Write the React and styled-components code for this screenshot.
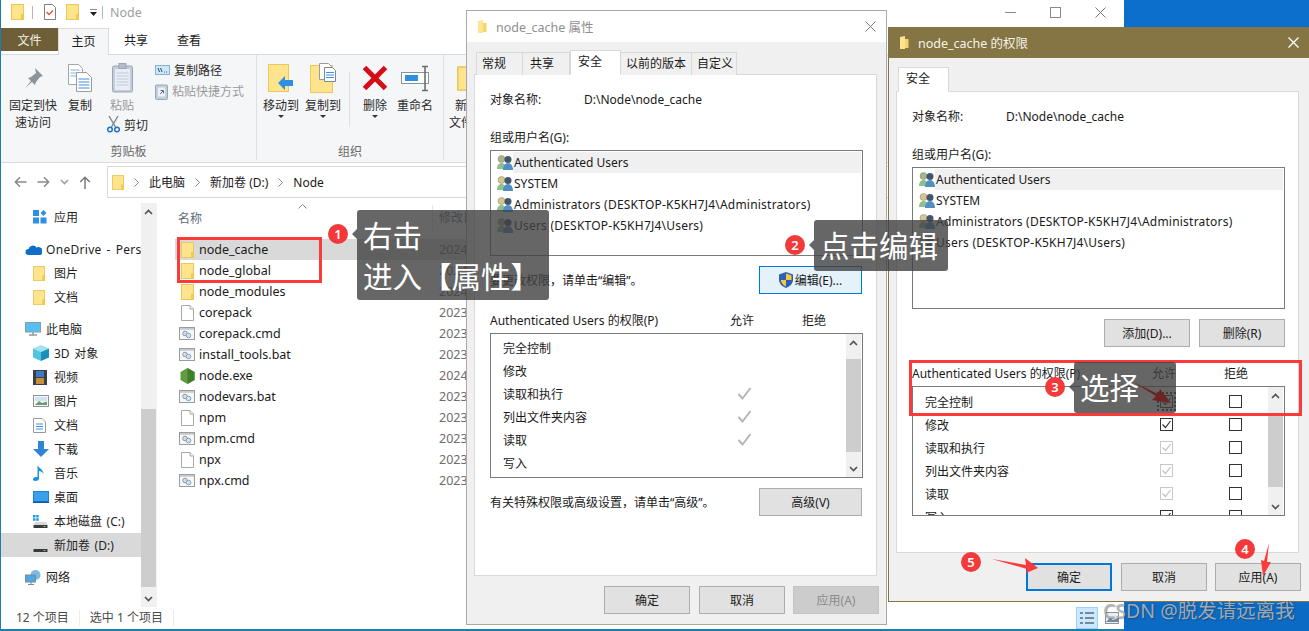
import React from "react";
import styled, { createGlobalStyle } from "styled-components";

const FONT = `"Noto Sans", "Noto Sans CJK SC", sans-serif`;

const Global = createGlobalStyle`
  html, body { margin: 0; padding: 0; background: #0a6cc6; }
  * { box-sizing: border-box; }
`;

const Desktop = styled.div`
  position: relative;
  width: 1309px;
  height: 631px;
  overflow: hidden;
  font-family: ${FONT};
  font-size: 12px;
  color: #1a1a1a;
  background: linear-gradient(180deg, #0d6fcc 0%, #0a6ac4 100%);
`;

/* ---------- explorer ---------- */

const Explorer = styled.div`
  position: absolute;
  left: 0;
  top: 0;
  width: 1124px;
  height: 631px;
  display: flex;
  flex-direction: column;
  background: #fff;
  border-left: 1px solid #1b7fae;
  border-bottom: 2px solid #1b7fae;
`;

const TitleBar = styled.div`
  height: 27px;
  flex: none;
  display: flex;
  align-items: center;
  padding: 0 0 3px 10px;
  position: relative;
`;

const TitleSep = styled.span`
  width: 1px;
  height: 13px;
  background: #b5b5b5;
  margin: 0 ${({ $r }) => $r || 0}px 0 ${({ $l }) => $l || 0}px;
`;

const TitleGap = styled.span`
  width: ${({ $w }) => $w}px;
  flex: none;
`;

const TitleText = styled.span`
  color: #a0a0a0;
  font-size: 12.5px;
`;

const WinButtons = styled.div`
  margin-left: auto;
  width: 101px;
  margin-right: 18px;
  display: flex;
  align-items: center;
  justify-content: space-between;
`;

const MenuTabs = styled.div`
  height: 28px;
  flex: none;
  display: flex;
  align-items: flex-start;
  padding-top: 1px;
  position: relative;
  z-index: 1;
`;

const FileTab = styled.div`
  width: 57px;
  height: 23px;
  background: #6e5f39;
  color: #f5f2e8;
  display: flex;
  align-items: center;
  justify-content: center;
`;

const MenuTab = styled.div`
  width: ${({ $w }) => $w}px;
  height: ${({ $on }) => ($on ? 27 : 23)}px;
  padding-top: 3px;
  text-align: center;
  background: ${({ $on }) => ($on ? "#f5f6f7" : "transparent")};
  border: ${({ $on }) => ($on ? "1px solid #dadbdc" : "none")};
  border-bottom: none;
`;

const Ribbon = styled.div`
  height: 109px;
  flex: none;
  margin-top: -1px;
  display: flex;
  background: #f5f6f7;
  border-top: 1px solid #dadbdc;
  border-bottom: 1px solid #dadbdc;
`;

const RibbonGroup = styled.div`
  width: ${({ $w }) => $w}px;
  flex: none;
  display: flex;
  flex-direction: column;
  padding-top: 5px;
  border-right: 1px solid #dfe0e1;
  margin-bottom: 2px;
`;

const GroupBody = styled.div`
  flex: 1;
  display: flex;
  padding-left: ${({ $pl }) => $pl || 0}px;
`;

const GroupLabel = styled.div`
  text-align: center;
  color: #6a6a6a;
  height: 16px;
  line-height: 16px;
`;

const BigButton = styled.div`
  width: ${({ $w }) => $w}px;
  flex: none;
  display: flex;
  flex-direction: column;
  align-items: center;
  line-height: 17px;
  text-align: center;
  white-space: nowrap;
  color: ${({ $off }) => ($off ? "#9a9a9a" : "#2a2a2a")};
`;

const BigIcon = styled.div`
  height: 36px;
  display: flex;
  align-items: center;
  justify-content: center;
  margin-bottom: 1px;
`;

const Caret = styled.span`
  width: 0;
  height: 0;
  margin-top: 1px;
  border: 3px solid transparent;
  border-top: 3px solid #333;
  border-bottom: none;
`;

const PasteColumn = styled.div`
  width: 52px;
  flex: none;
  display: flex;
  flex-direction: column;
`;

const SmallColumn = styled.div`
  display: flex;
  flex-direction: column;
  gap: 5px;
  padding-top: 2px;
`;

const SmallRow = styled.div`
  display: flex;
  align-items: center;
  gap: 4px;
  height: 16px;
  color: ${({ $off }) => ($off ? "#9a9a9a" : "#2a2a2a")};
`;

const CutRow = styled(SmallRow)`
  margin: 2px 0 0 4px;
  height: 17px;
`;

const GroupRule = styled.span`
  width: 1px;
  height: 55px;
  margin: 12px 0 0;
  background: #dfe0e1;
  flex: none;
`;

const AddressRow = styled.div`
  height: 42px;
  flex: none;
  display: flex;
  align-items: center;
  padding: 0 0 4px 13px;
`;

const NavGlyphs = styled.div`
  width: 93px;
  flex: none;
  display: flex;
  align-items: center;
  gap: 10px;
`;

const AddressBox = styled.div`
  flex: 1;
  height: 32px;
  display: flex;
  align-items: center;
  padding-left: 4px;
  border: 1px solid #d9d9d9;
  border-right: none;
  font-size: 12px;
`;

const Chevron = styled.svg`
  margin: 0 10px;
  flex: none;
`;

const MainArea = styled.div`
  flex: 1;
  min-height: 0;
  margin-top: -2px;
  display: flex;
`;

const NavPane = styled.div`
  width: 140px;
  flex: none;
  padding-top: 2px;
  overflow: hidden;
`;

const NavItem = styled.div`
  height: 24px;
  display: flex;
  align-items: center;
  white-space: nowrap;
  overflow: hidden;
  word-spacing: 1.5px;
  letter-spacing: ${({ $wide }) => ($wide ? "0.3px" : "0")};
  margin-top: ${({ $gap }) => $gap || 0}px;
  padding-left: ${({ $top }) => ($top ? 24 : 32)}px;
  background: ${({ $on }) => ($on ? "#d9d9d9" : "transparent")};
  color: #1f1f1f;
`;

const NavIcon = styled.span`
  width: 21px;
  flex: none;
  display: flex;
  align-items: center;
`;

const VScroll = styled.div`
  width: ${({ $w }) => $w || 15}px;
  flex: none;
  display: flex;
  flex-direction: column;
  align-items: stretch;
  background: #f0f0f0;
`;

const ScrollArrow = styled.div`
  height: ${({ $h }) => $h || 17}px;
  flex: none;
  display: flex;
  align-items: center;
  justify-content: center;
`;

const ScrollGap = styled.div`
  height: ${({ $h }) => $h}px;
  flex: ${({ $h }) => ($h ? "none" : 1)};
`;

const ScrollThumb = styled.div`
  height: ${({ $h }) => $h}px;
  flex: none;
  background: #cdcdcd;
`;

const ListPane = styled.div`
  flex: 1;
  min-width: 0;
  padding: 2px 0 0 19px;
  border-left: 1px solid #f2f2f2;
  position: relative;
`;

const ListHead = styled.div`
  height: 34px;
  display: flex;
  align-items: flex-start;
  color: #5f6b7a;
`;

const HeadName = styled.span`
  width: 256px;
  flex: none;
  position: relative;
  padding: 4px 0 0 2px;
`;

const SortMark = styled.svg`
  position: absolute;
  left: 122px;
  top: -1px;
`;

const HeadDate = styled.span`
  padding-left: 6px;
  border-left: 1px solid #e5e5e5;
  height: 26px;
  line-height: 26px;
`;

const FileRow = styled.div`
  height: 21px;
  margin-left: -1px;
  display: flex;
  align-items: center;
  background: ${({ $on }) => ($on ? "#d9d9d9" : "transparent")};
  font-size: 12.5px;
`;

const FileIconCell = styled.span`
  width: 24px;
  flex: none;
  display: flex;
  justify-content: center;
`;

const FileName = styled.span`
  width: 240px;
  flex: none;
`;

const FileDate = styled.span`
  color: #6d6d6d;
`;

const StatusBar = styled.div`
  height: 22px;
  flex: none;
  display: flex;
  align-items: center;
  padding-left: 15px;
  color: #4a4a4a;
  position: relative;
`;

const StatusCell = styled.span`
  padding-right: ${({ $pr }) => $pr}px;
  margin-right: 10px;
  border-right: 1px solid #ececec;
  line-height: 16px;
`;

const ViewToggle = styled.div`
  position: absolute;
  left: 1075px;
  top: 0;
  display: flex;
  gap: 3px;
  align-items: center;
`;

const ViewButton = styled.span`
  width: 22px;
  height: 22px;
  display: flex;
  align-items: center;
  justify-content: center;
  background: ${({ $on }) => ($on ? "#cce8ff" : "transparent")};
  border: ${({ $on }) => ($on ? "1px solid #99d1ff" : "none")};
`;

/* ---------- dialogs ---------- */

const Dialog = styled.div`
  position: absolute;
  left: ${({ $x }) => $x}px;
  top: ${({ $y }) => $y}px;
  width: 421px;
  height: ${({ $h }) => $h}px;
  display: flex;
  flex-direction: column;
  background: #f0f0f0;
  border: 1px solid ${({ $active }) => ($active ? "#857545" : "#a9a9a9")};
  ${({ $active }) => ($active ? "border-right: none; border-top: none;" : "")}
`;

const DialogTitle = styled.div`
  height: 31px;
  flex: none;
  display: flex;
  align-items: center;
  padding-left: 10px;
  gap: 9px;
  background: ${({ $active }) => ($active ? "#857545" : "#fff")};
  color: ${({ $active }) => ($active ? "#f5f2e6" : "#8f8f8f")};
  font-size: 12.5px;
`;

const DialogClose = styled.span`
  margin-left: auto;
  margin-right: 10px;
  display: flex;
`;

const TabStrip = styled.div`
  height: ${({ $h }) => $h}px;
  flex: none;
  display: flex;
  align-items: flex-end;
  padding-left: 2px;
  margin-left: 7px;
  position: relative;
  z-index: 1;
`;

const DlgTab = styled.div`
  width: ${({ $w }) => $w}px;
  height: ${({ $on }) => ($on ? 25 : 23)}px;
  padding-left: ${({ $pl }) => $pl || 6}px;
  padding-top: 1px;
  background: ${({ $on }) => ($on ? "#fff" : "#f0f0f0")};
  border: 1px solid #d9d9d9;
  border-bottom: ${({ $on }) => ($on ? "1px solid #fff" : "none")};
  border-left: ${({ $noLeft }) => ($noLeft ? "none" : "1px solid #d9d9d9")};
  white-space: nowrap;
`;

const Panel = styled.div`
  height: ${({ $h }) => $h}px;
  flex: none;
  margin: -1px 0 0 7px;
  width: 403px;
  background: #fff;
  border: 1px solid #d9d9d9;
  padding: 16px 13px 0 15px;
  display: flex;
  flex-direction: column;
`;

const NameLine = styled.div`
  height: 18px;
  line-height: 18px;
  display: flex;
`;

const NameKey = styled.span`
  width: 94px;
  flex: none;
`;

const GroupCaption = styled.div`
  height: 18px;
  line-height: 20px;
  margin: 19px 0 4px;
`;

const UserBox = styled.div`
  height: ${({ $h }) => $h}px;
  flex: none;
  border: 1px solid #7a7a7a;
  padding: 1px;
`;

const UserRow = styled.div`
  height: 21px;
  display: flex;
  align-items: center;
  padding-left: 5px;
`;

const UserIconCell = styled.span`
  width: 16px;
  flex: none;
  display: flex;
`;

const UserName = styled.span`
  flex: 1;
  height: 21px;
  line-height: 21px;
  padding-left: 1px;
  background: ${({ $on }) => ($on ? "#f0f0f0" : "transparent")};
  letter-spacing: ${({ $wide }) => ($wide ? "0.22px" : "0")};
  white-space: nowrap;
`;

const ActionRow = styled.div`
  height: 28px;
  flex: none;
  margin-top: 10px;
  display: flex;
  align-items: center;
  justify-content: ${({ $right }) => ($right ? "flex-end" : "space-between")};
  gap: 9px;
  padding-right: ${({ $right }) => ($right ? 0 : 1)}px;
`;

const Btn = styled.div`
  width: ${({ $w }) => $w || 86}px;
  height: 28px;
  flex: none;
  display: flex;
  align-items: center;
  justify-content: center;
  gap: 2px;
  white-space: nowrap;
  background: ${({ $variant }) =>
    $variant === "hot" ? "#e5f1fb" : $variant === "off" ? "#cccccc" : "#e1e1e1"};
  color: ${({ $variant }) => ($variant === "off" ? "#8a8a8a" : "#1a1a1a")};
  border: ${({ $variant }) =>
    $variant === "hot"
      ? "1px solid #0078d7"
      : $variant === "primary"
      ? "2px solid #0078d7"
      : $variant === "off"
      ? "1px solid #c4c4c4"
      : "1px solid #adadad"};
`;

const PermHead = styled.div`
  height: 18px;
  line-height: 20px;
  margin: 17px 0 4px;
  display: grid;
  grid-template-columns: 240px 72px auto;
`;

const PermBox = styled.div`
  height: ${({ $h }) => $h}px;
  flex: none;
  display: flex;
  border: 1px solid #7a7a7a;
  overflow: hidden;
`;

const PermList = styled.div`
  flex: 1;
  padding: ${({ $pt }) => $pt}px 0 0 12px;
  overflow: hidden;
`;

const PermRow = styled.div`
  height: 23px;
  display: grid;
  grid-template-columns: 228px 26px 43px 26px;
  align-items: center;
  justify-items: center;
`;

const PermName = styled.span`
  justify-self: start;
`;

const CheckBox = styled.span`
  width: 13px;
  height: 13px;
  display: block;
  border: 1px solid ${({ $dim }) => ($dim ? "#c8c8c8" : "#333")};
  background: #fff;
  position: relative;
`;

const FocusMark = styled.span`
  position: absolute;
  inset: -4px;
  border: 2px dotted #333;
`;

const BoxScroll = styled(VScroll)`
  margin: 0 1px;
`;

const Footer = styled.div`
  flex: 1;
  display: flex;
  justify-content: flex-end;
  gap: 8px;
  padding: 10px ${({ $pr }) => $pr}px 0 0;
  & > :first-child {
    margin-right: 1px;
  }
`;

/* ---------- annotations ---------- */

const RedFrame = styled.div`
  position: absolute;
  left: ${({ $x }) => $x}px;
  top: ${({ $y }) => $y}px;
  width: ${({ $w }) => $w}px;
  height: ${({ $h }) => $h}px;
  border: 3px solid #fb3a3a;
`;

const Note = styled.div`
  position: absolute;
  left: ${({ $x }) => $x}px;
  top: ${({ $y }) => $y}px;
  width: ${({ $w }) => $w}px;
  padding: ${({ $two }) => ($two ? "5px 0 3px 6px" : "5px 0 5px 6px")};
  background: rgba(64, 64, 64, 0.8);
  border-radius: 3px;
  color: #fff;
  font-size: 29.5px;
  line-height: 41px;
  white-space: nowrap;
  &::before {
    content: "";
    position: absolute;
    left: -5px;
    top: ${({ $two }) => ($two ? 19 : 20)}px;
    border: 5px solid transparent;
    border-left: none;
    border-right: 5px solid rgba(64, 64, 64, 0.8);
  }
`;

const Badge = styled.span`
  position: absolute;
  left: ${({ $x }) => $x}px;
  top: ${({ $y }) => $y}px;
  width: 20px;
  height: 20px;
  border-radius: 50%;
  background: #f23a3a;
  color: #fff;
  font-size: 13px;
  line-height: 20px;
  text-align: center;
  font-weight: 600;
`;

const ArrowLayer = styled.svg`
  position: absolute;
  left: 0;
  top: 0;
  pointer-events: none;
`;

const Watermark = styled.div`
  position: absolute;
  left: 1103px;
  top: 597px;
  font-size: 19.5px;
  line-height: 28px;
  color: rgba(172, 178, 184, 0.92);
  text-shadow: 1px 1px 1px rgba(50, 50, 50, 0.45);
  white-space: nowrap;
`;

/* ---------- drawings ---------- */

const Folder = ({ w = 13, h = 16 }) => (
  <svg width={w} height={h} viewBox="0 0 13 16">
    <rect x=".5" y=".5" width="12" height="15" fill="#fde48d" stroke="#edc65c" />
    <rect x="10" y="10" width="3" height="6" fill="#f3c84f" />
  </svg>
);

const BlankFile = () => (
  <svg width="13" height="16" viewBox="0 0 13 16">
    <path d="M.5.5h8.500l3.500 3.500v11.500h-12z" fill="#fff" stroke="#a9a9a9" />
    <path d="M9 .5v3.500h3.500" fill="#f2f2f2" stroke="#a9a9a9" />
  </svg>
);

const ScriptFile = () => (
  <svg width="16" height="13" viewBox="0 0 16 13">
    <rect x=".5" y=".5" width="15" height="12" fill="#f7f7f7" stroke="#9c9c9c" />
    <rect x="1" y="1" width="14" height="1.800" fill="#c4cad0" />
    <circle cx="6" cy="6.500" r="2.300" fill="#d8dde2" stroke="#8e9aa6" />
    <circle cx="9.500" cy="8.500" r="2.300" fill="#cfe3f3" stroke="#7fa4c2" />
  </svg>
);

const NodeIcon = () => (
  <svg width="15" height="16" viewBox="0 0 15 16">
    <path d="M7.500 0l7 4v8l-7 4-7-4V4z" fill="#5d9c3f" />
    <path d="M7.500 0l7 4v8l-7 4z" fill="#3e7d2d" />
  </svg>
);

const UsersIcon = ({ tint = "#b7ba84" }) => (
  <svg width="16" height="15" viewBox="0 0 16 15">
    <circle cx="4.500" cy="4" r="3.500" fill={tint} stroke="#7d8a6a" strokeWidth=".5" />
    <path d="M0 14c0-4 2-6 4.500-6s4.500 2 4.500 6z" fill="#8fbf8a" />
    <circle cx="11" cy="4.500" r="3.500" fill="#41566e" />
    <path d="M6 15c0-4 2-7 5-7s5 3 5 7z" fill="#4f8fc4" />
  </svg>
);

const Shield = () => (
  <svg width="14" height="16" viewBox="0 0 14 16">
    <path d="M7 0l7 2.500v5c0 4-3 7-7 8.500-4-1.500-7-4.500-7-8.500v-5z" fill="#2b5fb8" />
    <path d="M7 1.500v6.500h5.500v-4.500zM7 8v6.500c-2.600-1.200-4.800-3.400-5.200-6.500z" fill="#f7c93e" />
  </svg>
);

const Cross = ({ s = 11, color = "#7a7a7a", sw = 1 }) => (
  <svg width={s} height={s} viewBox="0 0 11 11">
    <path d="M.5.5l10 10M10.500.5l-10 10" stroke={color} strokeWidth={sw} fill="none" />
  </svg>
);

const Tick = ({ color = "#b5b5b5", s = 15, sw = 2 }) => (
  <svg width={s} height={s} viewBox="0 0 15 15">
    <path d="M1.500 8l4 4.500 8-10.500" stroke={color} strokeWidth={sw} fill="none" />
  </svg>
);

const BoxTickSvg = styled.svg`
  display: block;
`;

const BoxTick = ({ color }) => (
  <BoxTickSvg width="11" height="11" viewBox="0 0 11 11">
    <path d="M1.500 5.500l3 3 5-6.500" stroke={color} strokeWidth="1.200" fill="none" />
  </BoxTickSvg>
);

const ArrowUpSmall = ({ dir = "up", color = "#505050" }) => (
  <svg width="9" height="6" viewBox="0 0 9 6">
    <path
      d={dir === "up" ? "M1 5l3.500-3.500 3.500 3.500" : "M1 1l3.500 3.500 3.500-3.500"}
      stroke={color}
      strokeWidth="1.600"
      fill="none"
    />
  </svg>
);

const CrumbArrow = () => (
  <Chevron width="5" height="9" viewBox="0 0 5 9">
    <path d="M.5.5l4 4-4 4" stroke="#8a8a8a" strokeWidth="1" fill="none" />
  </Chevron>
);

const Pin = () => (
  <svg width="22" height="22" viewBox="0 0 22 22">
    <path d="M13 1l8 8-3 1-4 5-1 3-3-3-7 6 6-7-3-3 3-1 5-4z" fill="#8c949b" />
  </svg>
);

const PageStack = () => (
  <svg width="24" height="28" viewBox="0 0 24 28">
    <path d="M.5.500h10l4 4v16h-14z" fill="#fff" stroke="#a5a5a5" />
    <path d="M2.500 6h9M2.500 9h9M2.500 12h9" stroke="#7fb2e6" />
    <path d="M8.500 8.500h10l5 5v14h-15z" fill="#fff" stroke="#9a9a9a" />
    <path d="M10.500 15h11M10.500 18h11M10.500 21h11M10.500 24h11" stroke="#3f8fe0" />
  </svg>
);

const Clipboard = () => (
  <svg width="21" height="30" viewBox="0 0 21 30">
    <rect x=".5" y="3" width="20" height="26" rx="1.500" fill="#c4cedb" stroke="#9aa6b5" />
    <rect x="3" y="6" width="15" height="21" fill="#e9eef6" />
    <path d="M4.500 10h12M4.500 13h12M4.500 16h12M4.500 19h12M4.500 22h12" stroke="#c3cad4" />
    <rect x="7" y=".5" width="7" height="5" fill="#b4bcc8" stroke="#9aa6b5" />
  </svg>
);

const Scissors = () => (
  <svg width="13" height="17" viewBox="0 0 13 17">
    <path d="M2 0l6.500 11M11 0L4.500 11" stroke="#7d8791" strokeWidth="1.400" fill="none" />
    <circle cx="3" cy="13.500" r="2.300" fill="none" stroke="#1a74c4" strokeWidth="1.500" />
    <circle cx="10" cy="13.500" r="2.300" fill="none" stroke="#1a74c4" strokeWidth="1.500" />
  </svg>
);

const PathIcon = () => (
  <svg width="15" height="10" viewBox="0 0 15 10">
    <rect x=".5" y=".5" width="14" height="9" fill="#cfe6f7" stroke="#7fb4dc" />
    <path d="M3 3l1.500 4M5.500 3l1.500 4" stroke="#2a4a66" />
    <path d="M9 7h.8M11 7h.8" stroke="#2a4a66" />
  </svg>
);

const ShortcutIcon = () => (
  <svg width="13" height="17" viewBox="0 0 13 17">
    <rect x=".5" y="2" width="12" height="14.500" rx="1" fill="#c4cedb" stroke="#9aa6b5" />
    <rect x="3" y="4.500" width="7" height="9" fill="#eef2f7" />
    <path d="M5 11l3-3M5.500 7.500h3v3" stroke="#5c6a78" fill="none" />
  </svg>
);

const MoveTo = () => (
  <svg width="26" height="28" viewBox="0 0 26 28">
    <rect x=".5" y=".5" width="20" height="27" fill="#fde48d" stroke="#edc65c" />
    <path d="M10 19l7-7v4h8v6h-8v4z" fill="#2f8fe0" />
  </svg>
);

const CopyTo = () => (
  <svg width="26" height="30" viewBox="0 0 26 30">
    <rect x=".5" y="2.500" width="22" height="27" fill="#fde48d" stroke="#edc65c" />
    <path d="M9.500.5h9l3 3v13h-12z" fill="#fff" stroke="#9a9a9a" />
    <path d="M14.500 4.500h8l3 3v11h-11z" fill="#fff" stroke="#7d8791" />
    <path d="M16 9.500h8M16 12h8M16 14.500h8" stroke="#3f8fe0" />
  </svg>
);

const RedX = () => (
  <svg width="26" height="26" viewBox="0 0 26 26">
    <path d="M2.500 2.500l21 21M23.500 2.500l-21 21" stroke="#d60d18" strokeWidth="5" fill="none" />
  </svg>
);

const Rename = () => (
  <svg width="29" height="27" viewBox="0 0 29 27">
    <rect x=".5" y="7.500" width="27" height="11" fill="#fff" stroke="#8a929a" />
    <rect x="4" y="10" width="13" height="6" fill="#2f8fe0" />
    <path d="M21 1.500h6M24 1.500v24M21 25.500h6" stroke="#6e6e6e" strokeWidth="1.600" fill="none" />
  </svg>
);

const Apps = () => (
  <svg width="14" height="14" viewBox="0 0 14 14">
    <rect x="0" y="0" width="6" height="6" fill="#2f8fe8" />
    <rect x="0" y="7.500" width="6" height="6" fill="#2f8fe8" />
    <rect x="7.500" y="7.500" width="6" height="6" fill="#2f8fe8" />
    <path d="M10.500 0l3 3-3 3-3-3z" fill="#2f8fe8" />
  </svg>
);

const Cloud = () => (
  <svg width="17" height="11" viewBox="0 0 17 11">
    <path d="M3.500 11a3 3 0 010-6 4.500 4.500 0 018-1.500 3.500 3.500 0 014 7.500z" fill="#0f6fc8" />
  </svg>
);

const Monitor = () => (
  <svg width="16" height="14" viewBox="0 0 16 14">
    <rect x=".5" y=".5" width="15" height="9.500" fill="#58bff0" stroke="#8a9aa8" />
    <path d="M4 13h8M8 10v3" stroke="#8a9aa8" strokeWidth="1.500" />
  </svg>
);

const Cube = () => (
  <svg width="16" height="16" viewBox="0 0 16 16">
    <path d="M8 0l8 3.500-8 3.500-8-3.500z" fill="#9ee3f2" />
    <path d="M0 3.500l8 3.500v9l-8-3.500z" fill="#53c3e2" />
    <path d="M16 3.500l-8 3.500v9l8-3.500z" fill="#1a8fb8" />
  </svg>
);

const Film = () => (
  <svg width="14" height="15" viewBox="0 0 14 15">
    <rect width="14" height="15" fill="#3a3f46" />
    <rect x="3" y="1" width="8" height="6" fill="#3c7ac4" />
    <rect x="3" y="8" width="8" height="6" fill="#c48f3c" />
  </svg>
);

const Picture = () => (
  <svg width="16" height="12" viewBox="0 0 16 12">
    <rect x=".5" y=".5" width="15" height="11" fill="#f7f7f7" stroke="#8a929a" />
    <rect x="2" y="2" width="12" height="4" fill="#cfe3f3" />
    <path d="M2 10l4-4 3 2 5-1.500V10z" fill="#6f9a78" />
  </svg>
);

const DocLines = () => (
  <svg width="13" height="15" viewBox="0 0 13 15">
    <path d="M.5.500h8.500l3.500 3.500v10.500h-12z" fill="#fff" stroke="#9a9a9a" />
    <path d="M3 6h7M3 8.500h7M3 11h7" stroke="#3f8fe0" />
  </svg>
);

const Download = () => (
  <svg width="16" height="16" viewBox="0 0 16 16">
    <path d="M5 0h6v8h5l-8 8-8-8h5z" fill="#2f84d8" />
  </svg>
);

const Music = () => (
  <svg width="12" height="16" viewBox="0 0 12 16">
    <path d="M4.500 0c.5 3 6 4 6 9-1-2-3-3-4.500-3v7.500c0 1.500-1.500 2.500-3.500 2.500S0 15 0 14s1.500-2 3-2c.5 0 1 0 1.500.2z" fill="#1f8fe0" />
  </svg>
);

const DesktopIcon = () => (
  <svg width="16" height="12" viewBox="0 0 16 12">
    <rect width="16" height="12" fill="#1a7fd8" />
    <rect x="0" y="10.500" width="16" height="1.500" fill="#0e5aa6" />
    <rect x="1" y="1" width="14" height="9" fill="#3aa0ea" />
  </svg>
);

const Disk = ({ win }) => (
  <svg width="15" height="13" viewBox="0 0 15 13">
    {win && <path d="M0 0h2.500v2.500H0zM3.200 0h2.500v2.500H3.200zM0 3.200h2.500v2.500H0zM3.200 3.200h2.500v2.500H3.200z" fill="#1f9ae8" />}
    <path d="M2 7h11l1.500 3H.5z" fill="#d5d8db" />
    <rect x=".5" y="10" width="14" height="3" fill="#3a3a3a" />
    <rect x="10.500" y="11" width="2" height="1" fill="#60d060" />
  </svg>
);

const Network = () => (
  <svg width="16" height="15" viewBox="0 0 16 15">
    <circle cx="10.500" cy="5" r="5" fill="#7fb9e8" />
    <rect x=".5" y="5" width="10" height="7" fill="#4fa8e0" stroke="#7d8a96" />
    <path d="M3 14.500h6M6 12v2.500" stroke="#7d8a96" />
  </svg>
);

const BackSvg = styled.svg`
  transform: ${({ $flip }) => ($flip ? "scaleX(-1)" : "none")};
`;

const ArrowBack = ({ flip, color = "#8a8a8a" }) => (
  <BackSvg $flip={flip} width="13" height="12" viewBox="0 0 13 12">
    <path d="M12.500 6H1.500M6 1.200L1.300 6 6 10.800" stroke={color} strokeWidth="1.500" fill="none" />
  </BackSvg>
);

const ArrowUp = () => (
  <svg width="12" height="13" viewBox="0 0 12 13">
    <path d="M6 13V1.500M1.200 6L6 1.300 10.800 6" stroke="#7a7a7a" strokeWidth="1.500" fill="none" />
  </svg>
);

const NoteIcon = () => (
  <svg width="12" height="16" viewBox="0 0 12 16">
    <path d="M.5.500h8l3 3v12h-11z" fill="#fff" stroke="#808080" />
    <path d="M2.500 8l2.500 2.500 4-4" stroke="#e2562c" strokeWidth="1.300" fill="none" />
  </svg>
);

const DropMark = () => (
  <svg width="7" height="7" viewBox="0 0 7 7">
    <path d="M0 0h7" stroke="#222" />
    <path d="M0 3h7L3.500 7z" fill="#222" />
  </svg>
);

const TitleFolder = () => (
  <svg width="10" height="13" viewBox="0 0 10 13">
    <path d="M1 1l5-1v13H1z" fill="#fde48d" />
    <path d="M6 3h3.500v9H6z" fill="#f7d56a" />
  </svg>
);

/* ---------- data ---------- */

const NAV = [
  { label: "应用", icon: <Apps />, gap: 0 },
  { label: "OneDrive - Personal", icon: <Cloud />, top: true, gap: 8, wide: true },
  { label: "图片", icon: <Folder w={12} h={15} /> },
  { label: "文档", icon: <Folder w={12} h={15} /> },
  { label: "此电脑", icon: <Monitor />, top: true, gap: 8 },
  { label: "3D 对象", icon: <Cube /> },
  { label: "视频", icon: <Film /> },
  { label: "图片", icon: <Picture /> },
  { label: "文档", icon: <DocLines /> },
  { label: "下载", icon: <Download /> },
  { label: "音乐", icon: <Music /> },
  { label: "桌面", icon: <DesktopIcon /> },
  { label: "本地磁盘 (C:)", icon: <Disk win /> },
  { label: "新加卷 (D:)", icon: <Disk />, on: true },
  { label: "网络", icon: <Network />, top: true, gap: 8 },
];

const FILES = [
  ["node_cache", "folder", "2024", true],
  ["node_global", "folder", "2024"],
  ["node_modules", "folder", "2024"],
  ["corepack", "file", "2023"],
  ["corepack.cmd", "script", "2023"],
  ["install_tools.bat", "script", "2023"],
  ["node.exe", "node", "2024"],
  ["nodevars.bat", "script", "2023"],
  ["npm", "file", "2023"],
  ["npm.cmd", "script", "2023"],
  ["npx", "file", "2023"],
  ["npx.cmd", "script", "2023"],
];

const FILE_ICONS = {
  folder: <Folder />,
  file: <BlankFile />,
  script: <ScriptFile />,
  node: <NodeIcon />,
};

const USERS = [
  { name: "Authenticated Users", tint: "#a9b48e", on: true },
  { name: "SYSTEM", tint: "#d8c48c" },
  { name: "Administrators (DESKTOP-K5KH7J4\\Administrators)", tint: "#d8c48c", wide: true },
  { name: "Users (DESKTOP-K5KH7J4\\Users)", tint: "#a9b48e", wide: true },
];

const PERMS = ["完全控制", "修改", "读取和执行", "列出文件夹内容", "读取", "写入"];

/* ---------- pieces ---------- */

function Ribbons() {
  return (
    <Ribbon>
      <RibbonGroup $w={256}>
        <GroupBody $pl={8}>
          <BigButton $w={48}>
            <BigIcon><Pin /></BigIcon>
            固定到快<br />速访问
          </BigButton>
          <BigButton $w={46}>
            <BigIcon><PageStack /></BigIcon>
            复制
          </BigButton>
          <PasteColumn>
            <BigButton $w={38} $off>
              <BigIcon><Clipboard /></BigIcon>
              粘贴
            </BigButton>
            <CutRow><Scissors />剪切</CutRow>
          </PasteColumn>
          <SmallColumn>
            <SmallRow><PathIcon />复制路径</SmallRow>
            <SmallRow $off><ShortcutIcon />粘贴快捷方式</SmallRow>
          </SmallColumn>
        </GroupBody>
        <GroupLabel>剪贴板</GroupLabel>
      </RibbonGroup>
      <RibbonGroup $w={187}>
        <GroupBody $pl={3}>
          <BigButton $w={42}>
            <BigIcon><MoveTo /></BigIcon>
            移动到
            <Caret />
          </BigButton>
          <BigButton $w={42}>
            <BigIcon><CopyTo /></BigIcon>
            复制到
            <Caret />
          </BigButton>
          <BigButton $w={5} />
          <GroupRule />
          <BigButton $w={50}>
            <BigIcon><RedX /></BigIcon>
            删除
            <Caret />
          </BigButton>
          <BigButton $w={30}>
            <BigIcon><Rename /></BigIcon>
            重命名
          </BigButton>
        </GroupBody>
        <GroupLabel>组织</GroupLabel>
      </RibbonGroup>
      <RibbonGroup $w={60}>
        <GroupBody $pl={8}>
          <BigButton $w={30}>
            <BigIcon><Folder w={20} h={27} /></BigIcon>
            新建<br />文件夹
          </BigButton>
        </GroupBody>
      </RibbonGroup>
    </Ribbon>
  );
}

function ScrollBar({ before, thumb, w, arrow, Comp = VScroll }) {
  return (
    <Comp $w={w}>
      <ScrollArrow $h={arrow}><ArrowUpSmall /></ScrollArrow>
      <ScrollGap $h={before} />
      <ScrollThumb $h={thumb} />
      <ScrollGap />
      <ScrollArrow $h={arrow}><ArrowUpSmall dir="down" /></ScrollArrow>
    </Comp>
  );
}

function UsersList({ height }) {
  return (
    <UserBox $h={height}>
      {USERS.map((u) => (
        <UserRow key={u.name}>
          <UserIconCell><UsersIcon tint={u.tint} /></UserIconCell>
          <UserName $on={u.on} $wide={u.wide}>{u.name}</UserName>
        </UserRow>
      ))}
    </UserBox>
  );
}

function PermHeader() {
  return (
    <PermHead>
      <span>Authenticated Users 的权限(P)</span>
      <span>允许</span>
      <span>拒绝</span>
    </PermHead>
  );
}

function FirstDialog() {
  return (
    <Dialog $x={466} $y={10} $h={615}>
      <DialogTitle>
        <TitleFolder />
        node_cache 属性
        <DialogClose><Cross s={11} /></DialogClose>
      </DialogTitle>
      <TabStrip $h={33}>
        <DlgTab $w={47} $pl={5}>常规</DlgTab>
        <DlgTab $w={47} $noLeft $pl={7}>共享</DlgTab>
        <DlgTab $w={51} $on $pl={7}>安全</DlgTab>
        <DlgTab $w={71} $noLeft $pl={5}>以前的版本</DlgTab>
        <DlgTab $w={45} $noLeft $pl={5}>自定义</DlgTab>
      </TabStrip>
      <Panel $h={502}>
        <NameLine><NameKey>对象名称:</NameKey>D:\Node\node_cache</NameLine>
        <GroupCaption>组或用户名(G):</GroupCaption>
        <UsersList height={106} />
        <ActionRow>
          <span>要更改权限，请单击“编辑”。</span>
          <Btn $w={103} $variant="hot"><Shield />编辑(E)...</Btn>
        </ActionRow>
        <PermHeader />
        <PermBox $h={145}>
          <PermList $pt={2}>
            {PERMS.map((p, i) => (
              <PermRow key={p}>
                <PermName>{p}</PermName>
                {i >= 2 && i <= 4 ? <Tick /> : <span />}
              </PermRow>
            ))}
          </PermList>
          <ScrollBar Comp={BoxScroll} before={0} thumb={93} />
        </PermBox>
        <ActionRow>
          <span>有关特殊权限或高级设置，请单击“高级”。</span>
          <Btn $w={103}>高级(V)</Btn>
        </ActionRow>
      </Panel>
      <Footer $pr={7}>
        <Btn>确定</Btn>
        <Btn>取消</Btn>
        <Btn $variant="off">应用(A)</Btn>
      </Footer>
    </Dialog>
  );
}

function SecondDialog() {
  return (
    <Dialog $x={888} $y={27} $h={575} $active>
      <DialogTitle $active>
        <TitleFolder />
        node_cache 的权限
        <DialogClose><Cross s={11} color="#fff" sw={1.3} /></DialogClose>
      </DialogTitle>
      <TabStrip $h={34}>
        <DlgTab $w={51} $on $pl={7}>安全</DlgTab>
      </TabStrip>
      <Panel $h={462}>
        <NameLine><NameKey>对象名称:</NameKey>D:\Node\node_cache</NameLine>
        <GroupCaption>组或用户名(G):</GroupCaption>
        <UsersList height={142} />
        <ActionRow $right>
          <Btn>添加(D)...</Btn>
          <Btn>删除(R)</Btn>
        </ActionRow>
        <PermHeader />
        <PermBox $h={130}>
          <PermList $pt={3}>
            {PERMS.map((p, i) => (
              <PermRow key={p}>
                <PermName>{p}</PermName>
                <CheckBox $dim={i >= 2 && i <= 4}>
                  {i === 0 && <FocusMark />}
                  <BoxTick color={i >= 2 && i <= 4 ? "#c0c0c0" : "#333"} />
                </CheckBox>
                <span />
                <CheckBox />
              </PermRow>
            ))}
          </PermList>
          <ScrollBar Comp={BoxScroll} before={0} thumb={72} />
        </PermBox>
      </Panel>
      <Footer $pr={8}>
        <Btn $variant="primary">确定</Btn>
        <Btn>取消</Btn>
        <Btn>应用(A)</Btn>
      </Footer>
    </Dialog>
  );
}

export default function App() {
  return (
    <Desktop>
      <Global />
      <Explorer>
        <TitleBar>
          <Folder w={13} h={16} />
          <TitleSep $l={8} $r={11} />
          <NoteIcon />
          <TitleGap $w={10} />
          <Folder w={13} h={16} />
          <TitleGap $w={11} />
          <DropMark />
          <TitleSep $l={5} $r={7} />
          <TitleText>Node</TitleText>
          <WinButtons>
            <svg width="11" height="1"><rect width="11" height="1" fill="#8a8a8a" /></svg>
            <svg width="11" height="11"><rect x=".5" y=".5" width="10" height="10" fill="none" stroke="#8a8a8a" /></svg>
            <Cross />
          </WinButtons>
        </TitleBar>
        <MenuTabs>
          <FileTab>文件</FileTab>
          <MenuTab $w={51} $on>主页</MenuTab>
          <MenuTab $w={54}>共享</MenuTab>
          <MenuTab $w={52}>查看</MenuTab>
        </MenuTabs>
        <Ribbons />
        <AddressRow>
          <NavGlyphs>
            <ArrowBack />
            <ArrowBack flip />
            <ArrowUpSmall dir="down" color="#a0a0a0" />
            <ArrowUp />
          </NavGlyphs>
          <AddressBox>
            <Folder w={12} h={15} />
            <CrumbArrow />
            <span>此电脑</span>
            <CrumbArrow />
            <span>新加卷 (D:)</span>
            <CrumbArrow />
            <span>Node</span>
          </AddressBox>
        </AddressRow>
        <MainArea>
          <NavPane>
            {NAV.map((n) => (
              <NavItem key={n.label + n.gap} $gap={n.gap} $top={n.top} $on={n.on} $wide={n.wide}>
                <NavIcon>{n.icon}</NavIcon>
                {n.label}
              </NavItem>
            ))}
          </NavPane>
          <ScrollBar before={189} thumb={178} />
          <ListPane>
            <ListHead>
              <HeadName>
                名称
                <SortMark width="9" height="5" viewBox="0 0 9 5">
                  <path d="M.5 4.500l4-4 4 4" stroke="#8a8a8a" fill="none" />
                </SortMark>
              </HeadName>
              <HeadDate>修改日期</HeadDate>
            </ListHead>
            {FILES.map(([name, kind, date, on]) => (
              <FileRow key={name} $on={on}>
                <FileIconCell>{FILE_ICONS[kind]}</FileIconCell>
                <FileName>{name}</FileName>
                <FileDate>{date}</FileDate>
              </FileRow>
            ))}
          </ListPane>
        </MainArea>
        <StatusBar>
          <StatusCell $pr={10}>12 个项目</StatusCell>
          <StatusCell $pr={10}>选中 1 个项目</StatusCell>
          <ViewToggle>
            <ViewButton $on>
              <svg width="14" height="12" viewBox="0 0 14 12">
                <path d="M0 1h3M5 1h9M0 6h3M5 6h9M0 11h3M5 11h9" stroke="#5a6a7a" strokeWidth="1.500" />
              </svg>
            </ViewButton>
            <ViewButton>
              <svg width="14" height="12" viewBox="0 0 14 12">
                <rect x=".5" y=".5" width="13" height="11" fill="#e8eef4" stroke="#8a929a" />
                <path d="M1 10l4-4 3 2 5-2v4z" fill="#6f8a9a" />
              </svg>
            </ViewButton>
          </ViewToggle>
        </StatusBar>
      </Explorer>

      <FirstDialog />
      <SecondDialog />

      <RedFrame $x={177} $y={237} $w={145} $h={46} />
      <RedFrame $x={909} $y={360} $w={393} $h={56} />

      <Note $x={357} $y={210} $w={192} $two>
        <Badge $x={-29} $y={14}>1</Badge>
        右击<br />进入【属性】
      </Note>
      <Note $x={814} $y={220} $w={134}>
        <Badge $x={-29} $y={15}>2</Badge>
        点击编辑
      </Note>
      <Note $x={1074} $y={362} $w={102}>
        <Badge $x={-29} $y={15}>3</Badge>
        选择
      </Note>
      <Badge $x={1235} $y={539}>4</Badge>
      <Badge $x={961} $y={552}>5</Badge>

      <ArrowLayer width="1309" height="631">
        <path d="M992 559L1026 565L1025 558L1038 568L1026 573L1027 569Z" fill="#fb3a3a" />
        <path d="M1269 543L1267 562L1271 562L1263 576L1261 560L1264 561Z" fill="#fb3a3a" />
        <path d="M1133 382L1158 394L1160 389L1171 403L1152 400L1156 396Z" fill="#6e2424" />
      </ArrowLayer>

      <Watermark>CSDN @脱发请远离我</Watermark>
    </Desktop>
  );
}
